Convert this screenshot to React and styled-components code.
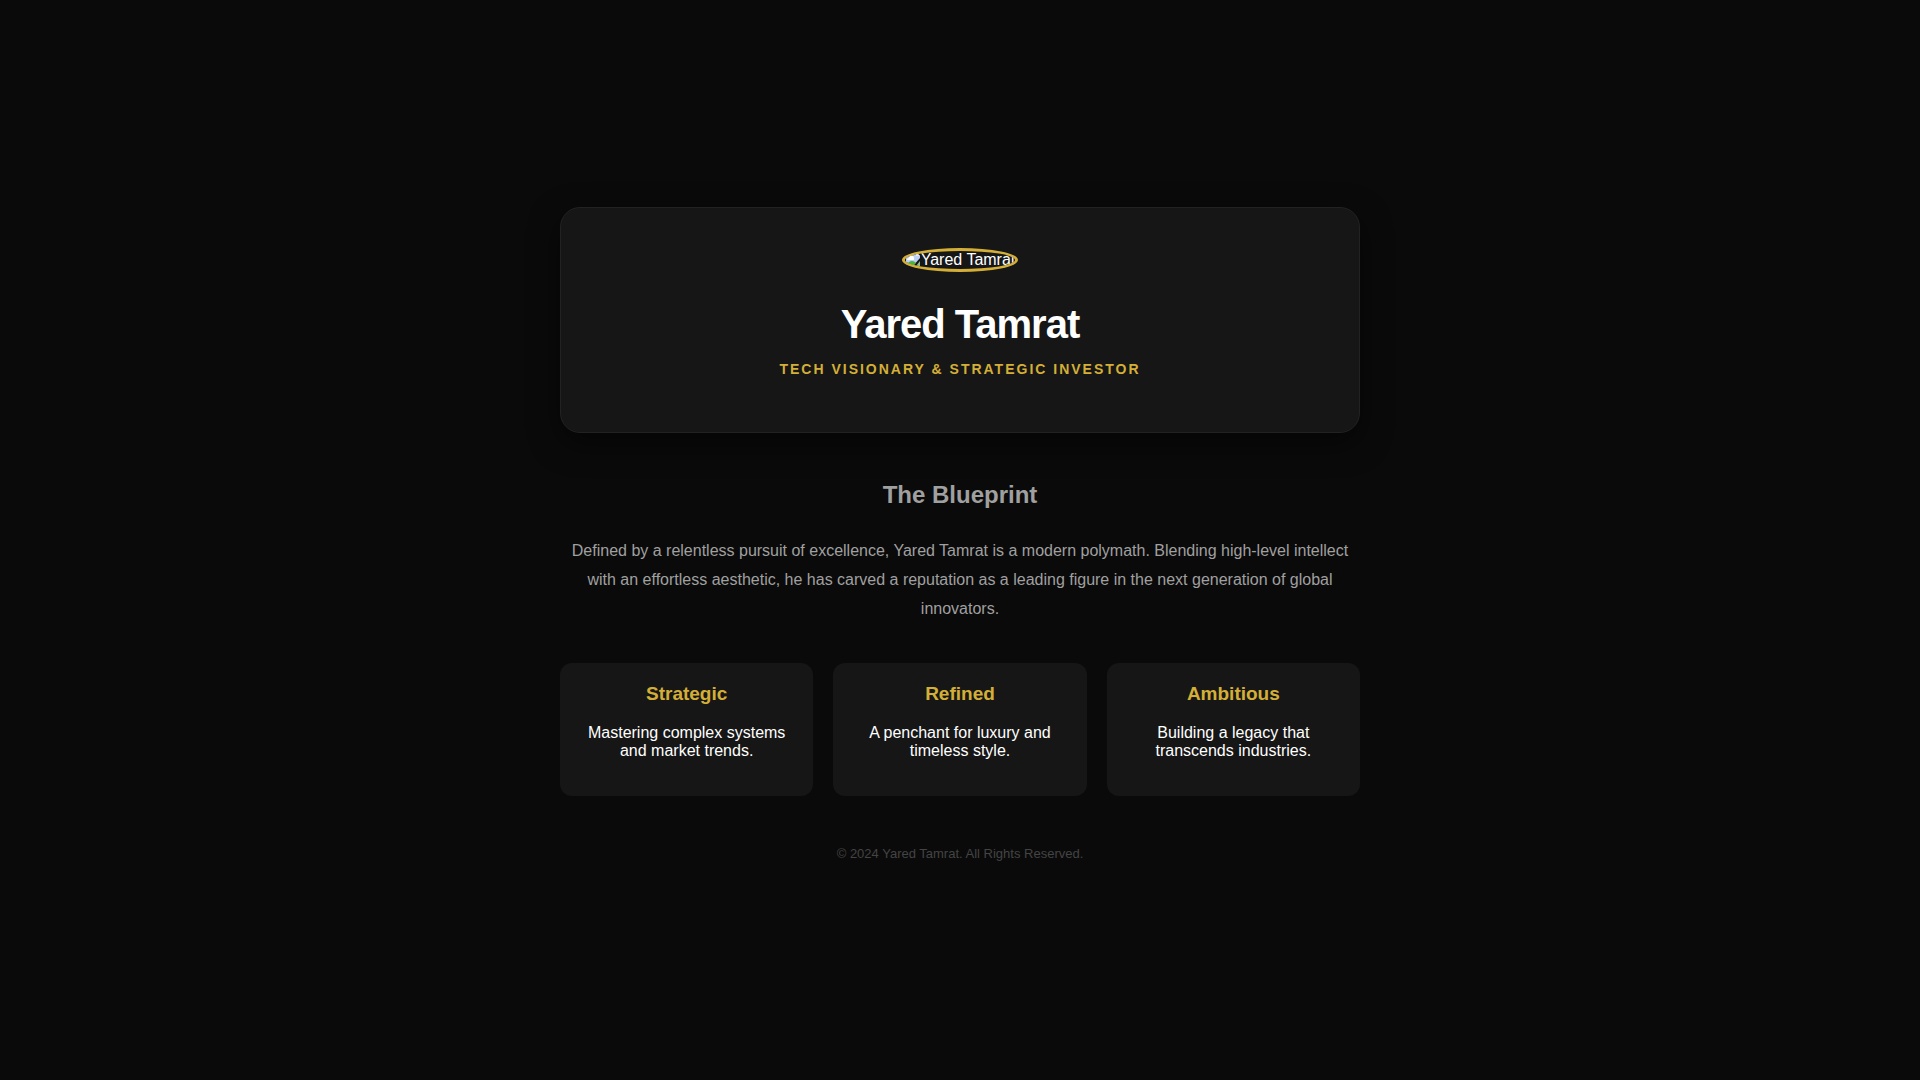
import React from "react";
import styled, { createGlobalStyle } from "styled-components";

const GlobalStyle = createGlobalStyle`
  body {
    margin: 0;
    background-color: #0a0a0a;
    color: #ffffff;
    font-family: "Liberation Sans", Arial, sans-serif;
  }
`;

const Page = styled.main`
  display: flex;
  justify-content: center;
  align-items: center;
  min-height: 100vh;
`;

const Container = styled.div`
  width: 90%;
  max-width: 800px;
  text-align: center;
`;

const Hero = styled.header`
  padding: 40px;
  background: #161616;
  border: 1px solid #222222;
  border-radius: 20px;
  box-shadow: 0 10px 30px rgba(0, 0, 0, 0.5);
`;

const Portrait = styled.span`
  display: inline-flex;
  align-items: flex-start;
  overflow: hidden;
  margin-bottom: 20px;
  border: 3px solid #d4af37;
  border-radius: 50%;
  line-height: 18px;

  svg {
    flex: none;
  }
`;

const Name = styled.h1`
  margin: 10px 0;
  font-size: 40px;
  letter-spacing: -1px;
`;

const Role = styled.p`
  margin: 14px 0;
  color: #d4af37;
  font-size: 14px;
  font-weight: bold;
  line-height: 17px;
  letter-spacing: 2px;
  text-transform: uppercase;
`;

const Bio = styled.section`
  margin: 40px 0;
  color: #a0a0a0;
  line-height: 29px;
`;

const BioTitle = styled.h2`
  margin: 20px 0;
  font-size: 24px;
  line-height: 43px;
`;

const Grid = styled.section`
  display: grid;
  grid-template-columns: repeat(3, 1fr);
  gap: 20px;
`;

const Card = styled.article`
  padding: 20px;
  background: #161616;
  border-radius: 12px;
`;

const CardTitle = styled.h3`
  margin: 0 0 19px;
  color: #d4af37;
  font-size: 19px;
`;

const CardText = styled.p`
  margin: 16px 0;
`;

const Footer = styled.footer`
  margin: 50px 0 13px;
  color: #444444;
  font-size: 13px;
`;

const traits = [
  { title: "Strategic", text: "Mastering complex systems and market trends." },
  { title: "Refined", text: "A penchant for luxury and timeless style." },
  { title: "Ambitious", text: "Building a legacy that transcends industries." },
];

function BrokenImage() {
  return (
    <svg width="16" height="16" viewBox="0 0 16 16" aria-hidden="true">
      <path d="M1 1h10l4 4v2L8 15H1z" fill="#bdd0f5" />
      <path d="M2 9a2 2 0 0 1 2-2 2.5 2.5 0 0 1 5 0v2z" fill="#ffffff" />
      <path d="M2 14c1-3 3-4 5-4s3 1 4 2l-3 3H2z" fill="#4db33d" />
      <path d="M15 10v5h-4z" fill="#8fbf8a" />
      <path d="M11 1v4h4z" fill="#e8eaee" />
    </svg>
  );
}

function App() {
  return (
    <Page>
      <GlobalStyle />
      <Container>
        <Hero>
          <Portrait>
            <BrokenImage />
            Yared Tamrat
          </Portrait>
          <Name>Yared Tamrat</Name>
          <Role>Tech Visionary &amp; Strategic Investor</Role>
        </Hero>
        <Bio>
          <BioTitle>The Blueprint</BioTitle>
          <p>
            Defined by a relentless pursuit of excellence, Yared Tamrat is a
            modern polymath. Blending high-level intellect with an effortless
            aesthetic, he has carved a reputation as a leading figure in the
            next generation of global innovators.
          </p>
        </Bio>
        <Grid>
          {traits.map(({ title, text }) => (
            <Card key={title}>
              <CardTitle>{title}</CardTitle>
              <CardText>{text}</CardText>
            </Card>
          ))}
        </Grid>
        <Footer>© 2024 Yared Tamrat. All Rights Reserved.</Footer>
      </Container>
    </Page>
  );
}

export default App;
